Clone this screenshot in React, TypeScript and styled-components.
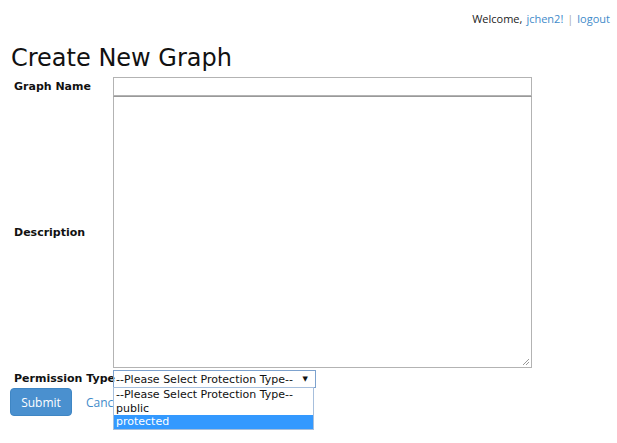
import React from "react";
import styled, { createGlobalStyle } from "styled-components";

const GlobalStyle = createGlobalStyle`
  html, body { margin: 0; padding: 0; background: #fff; }
  body { font-family: "DejaVu Sans", Verdana, sans-serif; color: #111; }
`;

const Page = styled.div`
  width: 617px;
  height: 443px;
  position: relative;
  overflow: hidden;
`;

const TopBar = styled.div`
  display: flex;
  justify-content: flex-end;
  padding: 12px 7px 0 0;
  font-family: "Open Sans", "Noto Sans", sans-serif;
  font-size: 11px;
  line-height: 14px;
  color: #222;
  gap: 4px;
`;

const Link = styled.a`
  color: #428bca;
  text-decoration: none;
`;

const Sep = styled.span`
  color: #aaa;
`;

const Title = styled.h1`
  margin: 17px 0 0 11px;
  font-size: 24px;
  font-weight: normal;
  line-height: 30px;
  color: #111;
`;

const Form = styled.div`
  display: grid;
  grid-template-columns: 99px 419px;
  padding-left: 14px;
  margin-top: 4px;
  align-items: center;
`;

const Label = styled.div`
  font-size: 11px;
  font-weight: bold;
  white-space: nowrap;
`;

const TextInput = styled.div`
  height: 17px;
  border: 1px solid #b3b3b3;
`;

const TextArea = styled.div`
  height: 270px;
  border: 1px solid #b3b3b3;
  border-top-color: #999;
  position: relative;
`;

const Grip = styled.svg`
  position: absolute;
  right: 1px;
  bottom: 1px;
`;

const SelectCell = styled.div`
  position: relative;
  margin-top: 2px;
`;

const SelectBox = styled.div`
  width: 199px;
  height: 16px;
  border: 1px solid #7da2ce;
  display: flex;
  align-items: center;
  justify-content: space-between;
  padding: 0 0 0 2px;
  box-sizing: content-box;
  font-size: 11px;
  color: #111;
`;

const Arrow = styled.span`
  font-size: 7px;
  margin-right: 7px;
`;

const DropList = styled.div`
  position: absolute;
  top: 17px;
  left: 0;
  width: 199px;
  border: 1px solid #a7bfdc;
  background: #fff;
  z-index: 2;
`;

const Option = styled.div<{ $active?: boolean }>`
  height: 13.67px;
  line-height: 13.67px;
  padding-left: 2px;
  font-size: 11px;
  background: ${(p) => (p.$active ? "#3399ff" : "#fff")};
  color: ${(p) => (p.$active ? "#fff" : "#111")};
`;

const Actions = styled.div`
  display: flex;
  align-items: center;
  gap: 14px;
  padding-left: 10px;
`;

const SubmitButton = styled.button`
  width: 62px;
  height: 28px;
  background: #4a90cf;
  border: 1px solid #3f86c4;
  border-radius: 4px;
  color: #fff;
  font-family: "Open Sans", "Noto Sans", sans-serif;
  font-size: 12px;
  padding: 0;
`;

const CancelLink = styled(Link)`
  font-family: "Open Sans", "Noto Sans", sans-serif;
  font-size: 12px;
`;

export default function App() {
  return (
    <Page>
      <GlobalStyle />
      <TopBar>
        <span>Welcome,</span>
        <Link href="#">jchen2!</Link>
        <Sep>|</Sep>
        <Link href="#">logout</Link>
      </TopBar>
      <Title>Create New Graph</Title>
      <Form>
        <Label>Graph Name</Label>
        <TextInput />
        <Label>Description</Label>
        <TextArea>
          <Grip width="8" height="8" viewBox="0 0 8 8">
            <line x1="7" y1="1" x2="1" y2="7" stroke="#999" strokeWidth="1" />
            <line x1="7" y1="4" x2="4" y2="7" stroke="#999" strokeWidth="1" />
          </Grip>
        </TextArea>
        <Label>Permission Type</Label>
        <SelectCell>
          <SelectBox>
            <span>--Please Select Protection Type--</span>
            <Arrow>▼</Arrow>
          </SelectBox>
          <DropList>
            <Option>--Please Select Protection Type--</Option>
            <Option>public</Option>
            <Option $active>protected</Option>
          </DropList>
        </SelectCell>
      </Form>
      <Actions>
        <SubmitButton>Submit</SubmitButton>
        <CancelLink href="#">Cancel</CancelLink>
      </Actions>
    </Page>
  );
}
